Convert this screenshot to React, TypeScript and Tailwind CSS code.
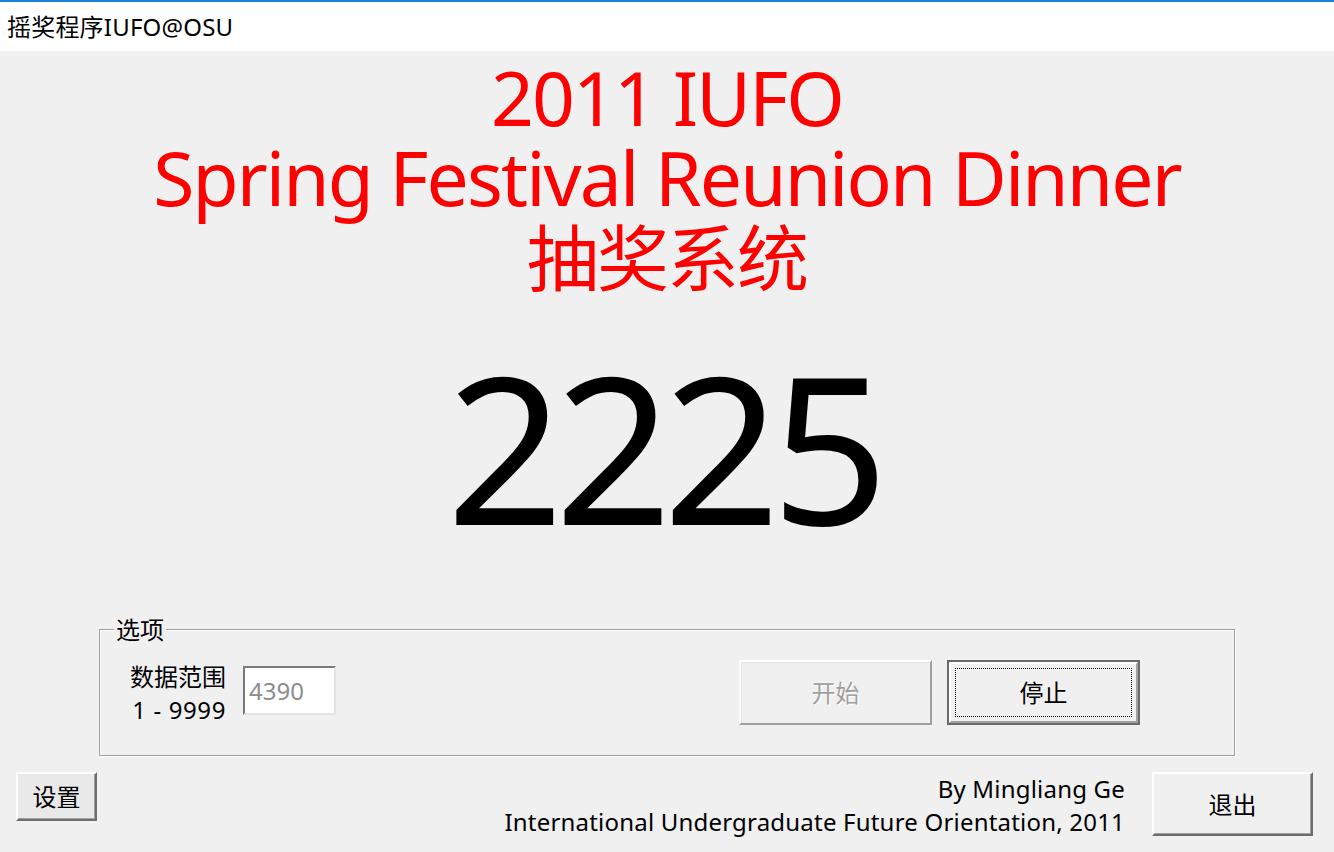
import React from 'react';

const font = '"Noto Sans", "Noto Sans CJK SC", sans-serif';

const App: React.FC = () => {
  return (
    <div className="w-[1334px] h-[852px] bg-[#f0f0f0] overflow-hidden text-black" style={{ fontFamily: font }}>
      {/* window title bar */}
      <div className="h-[51px] bg-white border-t-2 border-[#1883d7] flex items-center pl-[7px] text-[24px] leading-none tracking-[0.2px]">
        摇奖程序IUFO@OSU
      </div>

      {/* headline */}
      <div className="pt-[6px] text-center text-[#ff0000] text-[75px] leading-[80px] tracking-[-1.9px]">
        <div>2011 IUFO</div>
        <div>Spring Festival Reunion Dinner</div>
        <div className="text-[72px]">抽奖系统</div>
      </div>

      {/* drawn number */}
      <div className="mt-[39px] h-[220px] pr-[8px] text-center text-[205px] leading-[220px] tracking-[-9px]">2225</div>

      {/* options group box */}
      <div className="relative mt-[73px] ml-[99px] w-[1136px] h-[127px] border border-[#a0a0a0] shadow-[inset_1px_1px_0_#ffffff,1px_1px_0_#ffffff] flex pt-[30px] pl-[29px] pr-[94px] text-[24px] leading-[33px]">
        <span className="absolute -top-[17px] left-[14px] px-[2px] bg-[#f0f0f0] leading-[33px]">选项</span>

        <div className="w-[97px] text-right">
          <div>数据范围</div>
          <div className="tracking-[0.6px]">1 - 9999</div>
        </div>

        <div className="ml-[17px] mt-[6px] w-[93px] h-[49px] bg-white border-2 border-t-[#7a7a7a] border-l-[#7a7a7a] border-b-[#e3e3e3] border-r-[#e3e3e3] flex items-center pl-[4px] text-[#8c8c8c]">
          4390
        </div>

        <div className="ml-auto flex gap-[15px]">
          <div className="w-[193px] h-[65px] bg-[#f0f0f0] border-2 border-t-white border-l-white border-b-[#a0a0a0] border-r-[#a0a0a0] shadow-[inset_1px_1px_0_#e3e3e3] flex items-center justify-center text-[#a0a0a0] [text-shadow:1px_1px_0_#ffffff]">
            开始
          </div>
          <div className="relative w-[193px] h-[65px] bg-[#6a6a6a] p-[2px]">
            <div className="w-full h-full bg-[#f0f0f0] border-2 border-t-white border-l-white border-b-[#a0a0a0] border-r-[#a0a0a0] flex items-center justify-center">
              停止
            </div>
            <div className="absolute inset-[8px] border border-dotted border-black pointer-events-none" />
          </div>
        </div>
      </div>

      {/* footer */}
      <div className="mt-[16px] flex items-start pl-[16px] pr-[21px] text-[24px] leading-[33px]">
        <div className="w-[81px] h-[49px] bg-[#e9e9e9] border-2 border-t-white border-l-white border-b-[#6d6d6d] border-r-[#6d6d6d] shadow-[inset_-1px_-1px_0_#a0a0a0] flex items-center justify-center">
          设置
        </div>
        <div className="ml-auto text-right tracking-[0.2px]">
          <div>By Mingliang Ge</div>
          <div>International Undergraduate Future Orientation, 2011</div>
        </div>
        <div className="ml-[27px] w-[161px] h-[64px] bg-[#f0f0f0] border-2 border-t-white border-l-white border-b-[#6d6d6d] border-r-[#6d6d6d] shadow-[inset_-1px_-1px_0_#a0a0a0] flex items-center justify-center">
          退出
        </div>
      </div>
    </div>
  );
};

export default App;
